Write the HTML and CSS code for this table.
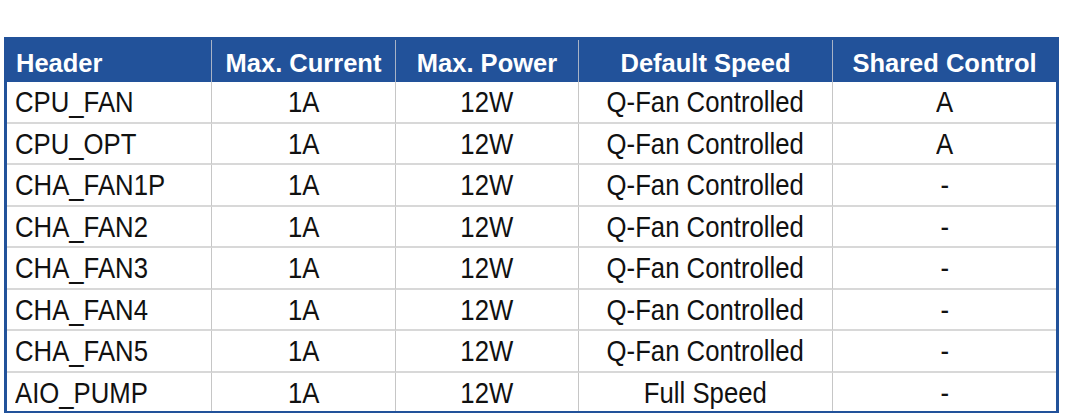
FILE: index.html
```html
<!DOCTYPE html>
<html>
<head>
<meta charset="utf-8">
<link rel="stylesheet" href="styles.css">
</head>
<body>
<table class="fan-table">
  <colgroup>
    <col class="c1"><col class="c2"><col class="c3"><col class="c4"><col class="c5">
  </colgroup>
  <thead>
    <tr>
      <th class="left">Header</th>
      <th>Max. Current</th>
      <th>Max. Power</th>
      <th>Default Speed</th>
      <th>Shared Control</th>
    </tr>
  </thead>
  <tbody>
    <tr><td class="left"><span class="t">CPU_FAN</span></td><td><span class="t">1A</span></td><td><span class="t">12W</span></td><td><span class="t">Q-Fan Controlled</span></td><td><span class="t">A</span></td></tr>
    <tr><td class="left"><span class="t">CPU_OPT</span></td><td><span class="t">1A</span></td><td><span class="t">12W</span></td><td><span class="t">Q-Fan Controlled</span></td><td><span class="t">A</span></td></tr>
    <tr><td class="left"><span class="t">CHA_FAN1P</span></td><td><span class="t">1A</span></td><td><span class="t">12W</span></td><td><span class="t">Q-Fan Controlled</span></td><td><span class="t">-</span></td></tr>
    <tr><td class="left"><span class="t">CHA_FAN2</span></td><td><span class="t">1A</span></td><td><span class="t">12W</span></td><td><span class="t">Q-Fan Controlled</span></td><td><span class="t">-</span></td></tr>
    <tr><td class="left"><span class="t">CHA_FAN3</span></td><td><span class="t">1A</span></td><td><span class="t">12W</span></td><td><span class="t">Q-Fan Controlled</span></td><td><span class="t">-</span></td></tr>
    <tr><td class="left"><span class="t">CHA_FAN4</span></td><td><span class="t">1A</span></td><td><span class="t">12W</span></td><td><span class="t">Q-Fan Controlled</span></td><td><span class="t">-</span></td></tr>
    <tr><td class="left"><span class="t">CHA_FAN5</span></td><td><span class="t">1A</span></td><td><span class="t">12W</span></td><td><span class="t">Q-Fan Controlled</span></td><td><span class="t">-</span></td></tr>
    <tr class="last"><td class="left"><span class="t">AIO_PUMP</span></td><td><span class="t">1A</span></td><td><span class="t">12W</span></td><td><span class="t">Full Speed</span></td><td><span class="t">-</span></td></tr>
  </tbody>
</table>
</body>
</html>
```

FILE: styles.css
```css
html, body {
  margin: 0;
  padding: 0;
  background: #ffffff;
}
body {
  padding: 37px 0 0 4px;
  font-family: "Liberation Sans", Arial, sans-serif;
  overflow: hidden;
}
.fan-table {
  width: 1055px;
  table-layout: fixed;
  border-collapse: separate;
  border-spacing: 0;
  border: 3px solid #22529a;
  color: #111111;
}
.c1 { width: 205px; }
.c2 { width: 184px; }
.c3 { width: 183px; }
.c4 { width: 254px; }
.c5 { width: 223px; }

.fan-table th {
  background: #22529a;
  color: #ffffff;
  font-size: 25.5px;
  font-weight: bold;
  height: 42px;
  padding: 5px 0 0 0;
  box-sizing: border-box;
  text-align: center;
  vertical-align: middle;
  border-right: 1px solid #a8b3c6;
  line-height: 1;
}
.fan-table td {
  font-size: 29px;
  height: 41.5px;
  box-sizing: border-box;
  padding: 2px 0 0 0;
  text-align: center;
  vertical-align: middle;
  border-right: 1px solid #c6c6c6;
  border-bottom: 2px solid #d8d8d8;
  line-height: 1;
}
.fan-table .t {
  display: inline-block;
  transform: scaleX(0.887);
  transform-origin: center;
}
.fan-table .left .t {
  transform-origin: left center;
}
.fan-table th:last-child,
.fan-table td:last-child {
  border-right: none;
}
.fan-table .left {
  text-align: left;
  padding-left: 9px;
}
.fan-table td.left {
  padding-left: 8px;
}
.fan-table tr.last td {
  border-bottom: none;
  height: 38px;
  padding-top: 4px;
}
```
